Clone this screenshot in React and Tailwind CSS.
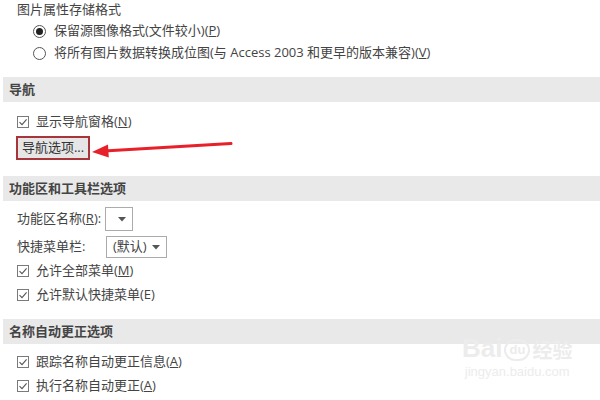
const font = { fontFamily: '"Open Sans", "Noto Sans CJK SC", sans-serif' };

function Check() {
  return (
    <span className="inline-flex h-[12px] w-[12px] shrink-0 items-center justify-center border border-[#7a7a7a] bg-white">
      <svg width="10" height="10" viewBox="0 0 10 10">
        <path d="M1.5 5.2 L4 7.6 L8.6 2.4" fill="none" stroke="#555" strokeWidth="1.1" />
      </svg>
    </span>
  );
}

function Radio({ on }) {
  return (
    <span className="inline-flex h-[13px] w-[13px] shrink-0 items-center justify-center rounded-full border border-[#555] bg-white">
      {on && <span className="h-[7px] w-[7px] rounded-full bg-[#222]" />}
    </span>
  );
}

function Band({ children }) {
  return (
    <div className="ml-[3px] flex h-[25px] items-center bg-[#e9e9e9] pl-[6px] text-[13px] font-semibold text-[#444]">
      {children}
    </div>
  );
}

function CheckRow({ children }) {
  return (
    <div className="flex h-[24px] items-center gap-[7px] pl-[17px]">
      <Check />
      <span>{children}</span>
    </div>
  );
}

function Caret() {
  return (
    <svg width="8" height="5" viewBox="0 0 8 5">
      <path d="M0 0 H8 L4 4.5 Z" fill="#555" />
    </svg>
  );
}

export default function App() {
  return (
    <div className="relative h-[400px] w-[600px] overflow-hidden bg-white text-[13px] text-[#444]" style={font}>
      <div className="flex h-[20px] items-center pl-[17px]">图片属性存储格式</div>
      <div className="flex h-[22px] items-center gap-[8px] pl-[33px]">
        <Radio on />
        <span>保留源图像格式(文件较小)(<u>P</u>)</span>
      </div>
      <div className="flex h-[22px] items-center gap-[8px] pl-[33px]">
        <Radio />
        <span>将所有图片数据转换成位图(与 Access 2003 和更早的版本兼容)(<u>V</u>)</span>
      </div>

      <div className="h-[13px]" />
      <Band>导航</Band>
      <div className="h-[8px]" />
      <CheckRow>显示导航窗格(<u>N</u>)</CheckRow>
      <div className="pl-[16px] pt-[2px]">
        <button className="flex h-[24px] w-[74px] items-center justify-center border-2 border-[#a8353a] bg-[#e6e6e6] text-[13px] text-[#333]">
          导航选项...
        </button>
      </div>

      <div className="h-[16px]" />
      <Band>功能区和工具栏选项</Band>
      <div className="h-[6px]" />
      <div className="flex h-[24px] items-center pl-[17px]">
        <span className="w-[88px]">功能区名称(<u>R</u>):</span>
        <span className="flex h-[24px] w-[28px] items-center justify-end border border-[#ababab] pr-[6px]">
          <Caret />
        </span>
      </div>
      <div className="mt-[5px] flex h-[22px] items-center pl-[17px]">
        <span className="w-[89px]">快捷菜单栏:</span>
        <span className="flex h-[22px] w-[61px] items-center justify-between border border-[#ababab] pl-[6px] pr-[6px]">
          <span>(默认)</span>
          <Caret />
        </span>
      </div>
      <div className="h-[1px]" />
      <CheckRow>允许全部菜单(<u>M</u>)</CheckRow>
      <CheckRow>允许默认快捷菜单(E)</CheckRow>

      <div className="h-[12px]" />
      <Band>名称自动更正选项</Band>
      <div className="h-[6px]" />
      <CheckRow>跟踪名称自动更正信息(<u>A</u>)</CheckRow>
      <CheckRow>执行名称自动更正(<u>A</u>)</CheckRow>

      {/* annotation arrow */}
      <svg className="absolute left-0 top-0" width="600" height="400">
        <line x1="231" y1="143.5" x2="104" y2="151" stroke="#e8202a" strokeWidth="3" strokeLinecap="round" />
        <path d="M92 152 L108 144.5 L108.8 157.5 Z" fill="#e8202a" />
      </svg>

      {/* watermark */}
      <div className="absolute left-[462px] top-[335px] flex flex-col items-center text-[#ececec]" style={{ fontFamily: '"Liberation Sans", "Noto Sans CJK SC", sans-serif' }}>
        <div className="flex items-end gap-[2px]">
          <span className="text-[26px] font-bold leading-none">Bai</span>
          <span className="flex h-[22px] w-[26px] items-center justify-center rounded-full border-2 border-[#ececec] text-[13px] font-bold">du</span>
          <span className="text-[20px] font-bold leading-none">经验</span>
        </div>
        <span className="mt-[4px] text-[13px] leading-none">jingyan.baidu.com</span>
      </div>
    </div>
  );
}
